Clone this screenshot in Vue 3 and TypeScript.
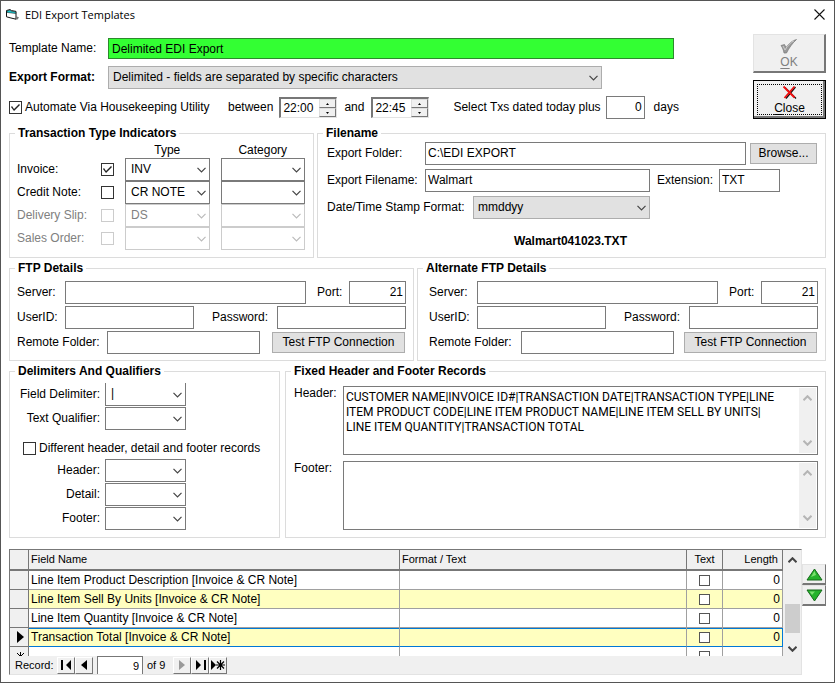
<script setup lang="ts">
import { h, ref } from 'vue'

interface IndicatorRow {
  id: string
  label: string
  checked: boolean
  type: string
  disabled: boolean
}

interface FtpPanel {
  id: string
  title: string
  port: string
}

interface FieldRow {
  name: string
  alt: boolean
  current: boolean
}

const Chevron = () =>
  h('svg', { class: 'chevron', viewBox: '0 0 9 6', width: 9, height: 6, 'aria-hidden': 'true' }, [
    h('path', { d: 'M0.5 0.8 L4.5 4.8 L8.5 0.8', fill: 'none', stroke: 'currentColor' }),
  ])

const indicators = ref<IndicatorRow[]>([
  { id: 'invoice', label: 'Invoice:', checked: true, type: 'INV', disabled: false },
  { id: 'credit', label: 'Credit Note:', checked: false, type: 'CR NOTE', disabled: false },
  { id: 'slip', label: 'Delivery Slip:', checked: false, type: 'DS', disabled: true },
  { id: 'order', label: 'Sales Order:', checked: false, type: '', disabled: true },
])

const ftpPanels: FtpPanel[] = [
  { id: 'ftp', title: 'FTP Details', port: '21' },
  { id: 'alt', title: 'Alternate FTP Details', port: '21' },
]

const recordDelimiters: string[] = ['Header', 'Detail', 'Footer']

const fields: FieldRow[] = [
  { name: 'Line Item Product Description [Invoice & CR Note]', alt: false, current: false },
  { name: 'Line Item Sell By Units [Invoice & CR Note]', alt: true, current: false },
  { name: 'Line Item Quantity [Invoice & CR Note]', alt: false, current: false },
  { name: 'Transaction Total [Invoice & CR Note]', alt: true, current: true },
]

const headerText = ref(
  'CUSTOMER NAME|INVOICE ID#|TRANSACTION DATE|TRANSACTION TYPE|LINE\nITEM PRODUCT CODE|LINE ITEM PRODUCT NAME|LINE ITEM SELL BY UNITS|\nLINE ITEM QUANTITY|TRANSACTION TOTAL',
)
const footerText = ref('')
const times = ref<string[]>(['22:00', '22:45'])
</script>

<template>
  <main class="window">
    <header class="titlebar">
      <svg class="app-icon" viewBox="0 0 13 11" width="13" height="11" aria-hidden="true">
        <path d="M0.5 1.5 L4 0.6 L5.5 1.6 L10 2.4 L10 10.2 L5 9 L0.5 7.8 Z" fill="#fff" stroke="#111" stroke-width="1" />
        <path d="M0.8 2 L4 1 L5.5 2.2 L9.8 3 L9.8 4.6 L1 3.4 Z" fill="#19c5cc" stroke="#111" stroke-width=".5" />
        <path d="M10 7 L13 8.4 L11.5 10.5 L10 10.5 Z" fill="#777" />
      </svg>
      <h1>EDI Export Templates</h1>
      <button class="close-x" type="button" aria-label="Close window">
        <svg viewBox="0 0 11 11" width="11" height="11"><path d="M0.5 0.5 L10.5 10.5 M10.5 0.5 L0.5 10.5" stroke="#111" stroke-width="1.1" /></svg>
      </button>
    </header>

    <div class="content">
      <section class="top">
        <div class="top-form">
          <div class="row name-row">
            <label class="lead" for="tpl">Template Name:</label>
            <input id="tpl" class="box grow green" type="text" value="Delimited EDI Export" />
          </div>
          <div class="row format-row">
            <label class="lead bold" for="fmt">Export Format:</label>
            <span class="combo grow gray">
              <select id="fmt"><option>Delimited - fields are separated by specific characters</option></select>
              <Chevron />
            </span>
          </div>
          <div class="row auto-row">
            <label class="check-label automate"><input class="check" type="checkbox" checked />Automate Via Housekeeping Utility</label>
            <label class="between" for="time0">between</label>
            <template v-for="(t, i) in times" :key="i">
              <span class="spin">
                <input :id="'time' + i" type="text" :value="t" />
                <span class="spin-buttons">
                  <button type="button" aria-label="Later"><svg viewBox="0 0 3 2" width="3" height="2"><path d="M0 2 L1.5 0 L3 2Z" /></svg></button>
                  <button type="button" aria-label="Earlier"><svg viewBox="0 0 3 2" width="3" height="2"><path d="M0 0 L1.5 2 L3 0Z" /></svg></button>
                </span>
              </span>
              <label v-if="i === 0" class="and" for="time1">and</label>
            </template>
            <label class="plus" for="plus">Select Txs dated today plus</label>
            <input id="plus" class="box num plus-box" type="text" value="0" />
            <span class="days">days</span>
          </div>
        </div>
        <div class="actions">
          <button class="big" type="button" disabled>
            <svg viewBox="0 0 18 15" width="18" height="15" aria-hidden="true">
              <path d="M1 6.5 L4.5 5.5 L6 8.5 C8.5 5 12 1.5 16.5 0.5 C12.5 4 9 9 6.5 14 L4 14 C3.5 11 2.5 8.5 1 6.5 Z" fill="#9a9a9a" stroke="#777" stroke-width=".7" />
              <path d="M3 7 L5 11 C7 7 11 3 14 1.8" fill="none" stroke="#ccc" stroke-width="1" />
            </svg>
            <span><u>O</u>K</span>
          </button>
          <button class="big focused" type="button">
            <svg viewBox="0 0 15 15" width="15" height="15" aria-hidden="true">
              <path d="M3 2.5 L14 13.5 M13.5 2 L4 13.5" stroke="#111" stroke-width="1.3" />
              <path d="M1.5 1.5 L12.5 12.5 M12.5 1.5 L2.5 13" stroke="#f01010" stroke-width="1.9" />
            </svg>
            <span><u>C</u>lose</span>
          </button>
        </div>
      </section>

      <section class="pair pair-types">
        <fieldset>
          <legend>Transaction Type Indicators</legend>
          <div class="body types">
            <div class="type-row heads"><span class="h-type">Type</span><span class="h-cat">Category</span></div>
            <div v-for="r in indicators" :key="r.id" class="type-row" :class="{ off: r.disabled }">
              <label :for="r.id">{{ r.label }}</label>
              <input :id="r.id" v-model="r.checked" class="check" type="checkbox" :disabled="r.disabled" />
              <span class="combo"><select :aria-label="r.label + ' type'" :disabled="r.disabled"><option>{{ r.type }}</option></select><Chevron /></span>
              <span class="combo"><select :aria-label="r.label + ' category'" :disabled="r.disabled"><option></option></select><Chevron /></span>
            </div>
          </div>
        </fieldset>

        <fieldset>
          <legend>Filename</legend>
          <div class="body files">
            <div class="row">
              <label class="file-label" for="folder">Export Folder:</label>
              <input id="folder" class="box grow" type="text" value="C:\EDI EXPORT" />
              <button class="flat browse" type="button">Browse...</button>
            </div>
            <div class="row">
              <label class="file-label" for="fname">Export Filename:</label>
              <input id="fname" class="box grow" type="text" value="Walmart" />
              <label class="ext-label" for="ext">Extension:</label>
              <input id="ext" class="box ext" type="text" value="TXT" />
            </div>
            <div class="row stamp">
              <label class="stamp-label" for="stamp">Date/Time Stamp Format:</label>
              <span class="combo grow gray"><select id="stamp"><option>mmddyy</option></select><Chevron /></span>
            </div>
            <strong class="result">Walmart041023.TXT</strong>
          </div>
        </fieldset>
      </section>

      <section class="pair pair-ftp">
        <fieldset v-for="p in ftpPanels" :key="p.id" :class="p.id">
          <legend>{{ p.title }}</legend>
          <div class="body ftp-body">
            <div class="row">
              <label class="short" :for="p.id + 'server'">Server:</label>
              <input :id="p.id + 'server'" class="box grow" type="text" />
              <label class="port-label" :for="p.id + 'port'">Port:</label>
              <input :id="p.id + 'port'" class="box num port" type="text" :value="p.port" />
            </div>
            <div class="row">
              <label class="short" :for="p.id + 'user'">UserID:</label>
              <input :id="p.id + 'user'" class="box grow" type="text" />
              <label class="pass-label" :for="p.id + 'pass'">Password:</label>
              <input :id="p.id + 'pass'" class="box grow" type="password" />
            </div>
            <div class="row">
              <label class="remote-label" :for="p.id + 'remote'">Remote Folder:</label>
              <input :id="p.id + 'remote'" class="box grow" type="text" />
              <button class="flat test" type="button">Test FTP Connection</button>
            </div>
          </div>
        </fieldset>
      </section>

      <section class="pair pair-records">
        <fieldset>
          <legend>Delimiters And Qualifiers</legend>
          <div class="body delims">
            <div class="row delim-row">
              <label for="fd">Field Delimiter:</label>
              <span class="combo open-top"><select id="fd"><option>|</option></select><Chevron /></span>
            </div>
            <div class="row delim-row">
              <label for="tq">Text Qualifier:</label>
              <span class="combo"><select id="tq"><option></option></select><Chevron /></span>
            </div>
            <label class="check-label differ"><input class="check" type="checkbox" />Different header, detail and footer records</label>
            <div v-for="d in recordDelimiters" :key="d" class="row delim-row">
              <label :for="'rd' + d">{{ d }}:</label>
              <span class="combo"><select :id="'rd' + d"><option></option></select><Chevron /></span>
            </div>
          </div>
        </fieldset>

        <fieldset>
          <legend>Fixed Header and Footer Records</legend>
          <div class="body fixed">
            <div class="memo-row">
              <label for="memoH">Header:</label>
              <div class="memo">
                <textarea id="memoH" v-model="headerText"></textarea>
                <div class="memo-scroll"><Chevron class="up" /><Chevron /></div>
              </div>
            </div>
            <div class="memo-row">
              <label for="memoF">Footer:</label>
              <div class="memo">
                <textarea id="memoF" v-model="footerText"></textarea>
                <div class="memo-scroll"><Chevron class="up" /><Chevron /></div>
              </div>
            </div>
          </div>
        </fieldset>
      </section>

      <section class="records">
        <div class="grid">
          <div class="grid-main">
            <div class="table-clip">
              <table>
                <colgroup><col class="c-sel" /><col class="c-name" /><col /><col class="c-text" /><col class="c-len" /></colgroup>
                <thead>
                  <tr><th></th><th>Field Name</th><th>Format / Text</th><th class="mid">Text</th><th class="right">Length</th></tr>
                </thead>
                <tbody>
                  <tr v-for="f in fields" :key="f.name" :class="{ alt: f.alt, current: f.current }">
                    <td class="sel"><svg v-if="f.current" viewBox="0 0 7 12" width="7" height="12"><path d="M0 0 L7 6 L0 12Z" /></svg></td>
                    <td>{{ f.name }}</td>
                    <td></td>
                    <td class="mid"><input class="check small" type="checkbox" :aria-label="f.name + ' is text'" /></td>
                    <td class="right">0</td>
                  </tr>
                  <tr>
                    <td class="sel new"><svg viewBox="0 0 9 9" width="9" height="9"><path d="M4.5 0V9 M0 4.5H9 M1 1L8 8 M8 1L1 8" stroke="#000" /></svg></td>
                    <td></td>
                    <td></td>
                    <td class="mid"><input class="check small" type="checkbox" aria-label="New field is text" /></td>
                    <td></td>
                  </tr>
                </tbody>
              </table>
            </div>
            <div class="grid-scroll"><Chevron class="up" /><span class="thumb"></span><Chevron /></div>
          </div>
          <nav class="record-nav">
            <label for="rec">Record:</label>
            <span class="nav-buttons">
              <button type="button" aria-label="First"><svg viewBox="0 0 11 10" width="11" height="10"><path d="M0 0H2V10H0Z M10 0V10L5 5Z" /></svg></button>
              <button type="button" aria-label="Previous"><svg viewBox="0 0 6 10" width="6" height="10"><path d="M6 0V10L0 5Z" /></svg></button>
            </span>
            <input id="rec" class="rec" type="text" value="9" />
            <span class="of">of 9</span>
            <span class="nav-buttons">
              <button type="button" aria-label="Next" disabled><svg viewBox="0 0 6 10" width="6" height="10"><path d="M0 0V10L6 5Z" fill="#999" /></svg></button>
              <button type="button" aria-label="Last"><svg viewBox="0 0 11 10" width="11" height="10"><path d="M9 0H11V10H9Z M1 0V10L6 5Z" /></svg></button>
              <button type="button" aria-label="New"><svg viewBox="0 0 14 10" width="14" height="10"><path d="M0 0V10L5 5Z" /><path d="M9.5 0V10 M5 5H14 M6 1.5L13 8.5 M13 1.5L6 8.5" stroke="#000" stroke-width="1.2" /></svg></button>
            </span>
          </nav>
        </div>
        <div class="movers">
          <button type="button" aria-label="Move up"><svg viewBox="0 0 17 13" width="17" height="13"><path d="M8.5 1 L16 12 H1Z" fill="#25b32b" stroke="#16691a" /><path d="M8.5 3 L5 9 L10 7Z" fill="#7be06f" /></svg></button>
          <button type="button" aria-label="Move down"><svg viewBox="0 0 17 13" width="17" height="13"><path d="M8.5 12 L16 1 H1Z" fill="#25b32b" stroke="#16691a" /><path d="M3.5 2.5 H9 L6 6Z" fill="#7be06f" /></svg></button>
        </div>
      </section>
    </div>
  </main>
</template>

<style>
body {
  background: #fff;
}
</style>

<style scoped>
.window {
  box-sizing: border-box;
  min-height: 100vh;
  border: 1px solid #555;
  background: #fff;
  color: #000;
  font: 12px/15px "Liberation Sans", Arial, sans-serif;
  overflow: hidden;
}
.window *,
.window *::after {
  box-sizing: border-box;
}
input,
select,
textarea,
button {
  font: inherit;
  color: inherit;
  margin: 0;
  padding: 0;
  border-radius: 0;
  outline: 0;
}
label {
  white-space: nowrap;
  flex: none;
}
.titlebar {
  height: 26px;
  display: flex;
  align-items: center;
  padding: 0 9px 0 5px;
}
.app-icon {
  flex: none;
}
.titlebar h1 {
  flex: 1;
  margin: 0 0 0 6px;
  font: 400 11px/15px "Open Sans", "Noto Sans", sans-serif;
}
.close-x {
  display: flex;
  border: 0;
  background: none;
}
.content {
  padding: 0 8px;
  display: flex;
  flex-direction: column;
  gap: 3px;
}
.row {
  display: flex;
  align-items: center;
  height: 23px;
}
.grow {
  flex: 1;
  min-width: 0;
}
.box {
  height: 100%;
  border: 1px solid #7a7a7a;
  background: #fff;
  padding: 0 2px 2px;
  min-width: 0;
}
.num {
  text-align: right;
}
.bold {
  font-weight: 700;
}

/* Template name, format and schedule */
.top {
  display: flex;
  margin-bottom: 4px;
}
.top-form {
  flex: 1;
  padding-top: 11px;
  display: flex;
  flex-direction: column;
  gap: 7px;
}
.name-row {
  height: 21px;
  padding-right: 79px;
}
.format-row {
  padding-right: 151px;
}
.lead {
  width: 99px;
}
.green {
  background: #3f3;
  border-color: #2c8a2c;
  padding: 0 3px;
}
.check-label {
  display: flex;
  align-items: center;
  gap: 3px;
}
.automate {
  width: 204px;
}
.between {
  margin: 0 6px 0 15px;
}
.and {
  margin: 0 7px;
}
.plus {
  margin-left: 24px;
  margin-right: 5px;
}
.plus-box {
  width: 39px;
}
.days {
  margin-left: 9px;
}
.spin {
  display: flex;
  width: 58px;
  height: 21px;
  border: 1px solid #e3e3e3;
  border-top: 2px solid #777;
  border-left: 2px solid #777;
}
.spin input {
  flex: 1;
  min-width: 0;
  border: 0;
  padding-left: 2px;
  background: none;
}
.spin-buttons {
  width: 17px;
  display: flex;
  flex-direction: column;
}
.spin-buttons button {
  flex: 1;
  display: flex;
  align-items: center;
  justify-content: center;
  background: #f0f0f0;
  border: 1px solid #ddd;
  border-right-color: #777;
  border-bottom-color: #777;
}
.actions {
  width: 73px;
  padding-top: 7px;
  display: flex;
  flex-direction: column;
  gap: 7px;
}
.big {
  height: 39px;
  padding-top: 2px;
  display: flex;
  flex-direction: column;
  align-items: center;
  justify-content: center;
  gap: 1px;
  background: #f0f0f0;
  border: 1px solid #e3e3e3;
  border-right: 2px solid #777;
  border-bottom: 2px solid #777;
}
.big:disabled {
  color: #808080;
}
.big u {
  text-underline-offset: 2px;
}
.big.focused {
  border: 1px solid #000;
  box-shadow: inset -2px -2px 0 #777;
  position: relative;
}
.big.focused::after {
  content: "";
  position: absolute;
  inset: 3px;
  border: 1px dotted #000;
}

/* Combo boxes and check boxes */
.combo {
  display: grid;
  height: 23px;
  align-items: center;
}
.combo select {
  grid-area: 1 / 1;
  appearance: none;
  width: 100%;
  height: 23px;
  min-width: 0;
  border: 1px solid #7a7a7a;
  background: #fff;
  padding: 0 18px 1px 5px;
  opacity: 1;
}
.combo.gray select {
  background: #e1e1e1;
  border-color: #adadad;
  padding-left: 4px;
}
.combo .chevron {
  grid-area: 1 / 1;
  justify-self: end;
  margin-right: 4px;
  pointer-events: none;
}
.chevron {
  color: #444;
  stroke-width: 1.2px;
}
.up {
  transform: rotate(180deg);
}
.combo.open-top select {
  border-top: 0;
}
.check {
  appearance: none;
  flex: none;
  width: 13px;
  height: 13px;
  border: 1px solid #333;
  background: #fff;
  display: grid;
  place-items: center;
}
.check:checked::after {
  content: "";
  width: 11px;
  height: 11px;
  background: #222;
  clip-path: polygon(1px 5px, 2px 4px, 4px 7px, 9px 2px, 10px 3px, 4px 9px);
}
.check.small {
  width: 11px;
  height: 11px;
  margin: 0 auto;
  border-color: #555;
}

/* Group boxes */
.pair {
  display: grid;
  gap: 3px;
}
.pair-types {
  grid-template-columns: 305fr 509fr;
}
.pair-ftp {
  grid-template-columns: 405fr 409fr;
}
.pair-records {
  grid-template-columns: 271fr 541fr;
  column-gap: 5px;
}
fieldset {
  min-width: 0;
  margin: 0;
  padding: 0;
  border: 1px solid #dcdcdc;
}
legend {
  margin-left: 5px;
  padding: 0 3px;
  height: 14px;
  font-weight: 700;
  line-height: 14px;
}
.body {
  display: flex;
  flex-direction: column;
}
.types {
  padding: 3px 8px 7px 7px;
}
.type-row {
  display: grid;
  grid-template-columns: 84px 13px 1fr 1fr;
  align-items: center;
  height: 23px;
}
.type-row .combo {
  margin-left: 11px;
}
.type-row.heads {
  height: 15px;
}
.h-type {
  grid-column: 3;
  text-align: center;
  margin-left: 11px;
}
.h-cat {
  text-align: center;
  margin-left: 11px;
}
.off {
  color: #808080;
}
.off select,
.off .check {
  border-color: #ccc;
}
.off .chevron {
  color: #bbb;
}
.files {
  padding: 2px 7px 0 9px;
  gap: 4px;
}
.file-label {
  width: 98px;
}
.flat {
  height: 21px;
  background: #e1e1e1;
  border: 1px solid #adadad;
}
.browse {
  width: 67px;
  margin-left: 4px;
  margin-right: 1px;
}
.ext-label {
  width: 62px;
  margin-left: 7px;
}
.ext {
  width: 61px;
  margin-right: 38px;
}
.stamp {
  padding-right: 168px;
}
.stamp-label {
  width: 146px;
}
.result {
  margin-top: 11px;
  padding-right: 4px;
  text-align: center;
}
.ftp-body {
  padding: 6px 7px;
  gap: 2px;
}
.alt .ftp-body {
  padding-left: 11px;
}
.short {
  width: 48px;
}
.port-label {
  width: 32px;
  margin-left: 11px;
}
.port {
  width: 57px;
}
.pass-label {
  width: 65px;
  margin-left: 18px;
}
.remote-label {
  width: 90px;
}
.alt .remote-label {
  width: 92px;
}
.test {
  width: 133px;
  margin-left: 12px;
  margin-right: 1px;
}
.alt .test {
  margin-left: 10px;
}
.delims {
  padding: 5px 7px 7px;
  gap: 1px;
}
.delim-row label {
  width: 83px;
  margin-right: 5px;
  text-align: right;
}
.delim-row .combo {
  width: 81px;
}
.differ {
  height: 27px;
  padding: 7px 0 0 6px;
}
.fixed {
  padding: 8px 7px 6px 8px;
  gap: 6px;
}
.memo-row {
  display: flex;
}
.memo-row label {
  width: 49px;
}
.memo {
  flex: 1;
  min-width: 0;
  height: 69px;
  display: flex;
  border: 1px solid #7a7a7a;
}
.memo textarea {
  flex: 1;
  min-width: 0;
  border: 0;
  resize: none;
  padding: 3px 2px 0;
  overflow: hidden;
  background: none;
  font-family: Roboto, "Liberation Sans", sans-serif;
}
.memo-scroll {
  width: 17px;
  margin: 1px;
  background: #f0f0f0;
  display: flex;
  flex-direction: column;
  justify-content: space-between;
  align-items: center;
  padding: 7px 0;
}
.memo-scroll .chevron {
  color: #b5b5b5;
  stroke-width: 2px;
}

/* Field list */
.records {
  display: flex;
  margin-top: 8px;
}
.grid {
  flex: 1;
  min-width: 0;
  border: 1px solid #e3e3e3;
  border-top-color: #777;
  border-left-color: #777;
  background: #f0f0f0;
}
.grid-main {
  display: flex;
}
.table-clip {
  flex: 1;
  min-width: 0;
  height: 106px;
  overflow: hidden;
}
table {
  width: 100%;
  table-layout: fixed;
  border-collapse: separate;
  border-spacing: 0;
  background: #fff;
}
.c-sel {
  width: 19px;
}
.c-name {
  width: 48%;
}
.c-text {
  width: 36px;
}
.c-len {
  width: 60px;
}
th {
  height: 21px;
  padding: 0 2px;
  background: #f0f0f0;
  border-right: 1px solid #777;
  border-bottom: 2px solid #777;
  font-size: 11px;
  font-weight: 400;
  text-align: left;
}
td {
  height: 19px;
  padding: 0 2px;
  line-height: 16px;
  border-right: 1px solid #a0a0a0;
  border-bottom: 1px solid #a0a0a0;
}
th.mid,
td.mid {
  text-align: center;
}
th.right {
  text-align: right;
  padding-right: 4px;
}
td.right {
  text-align: right;
}
.alt td {
  background: #ffffc0;
}
td.mid {
  line-height: 0;
}
td.sel,
.alt td.sel {
  background: #f0f0f0;
  border-right: 1px solid #777;
  border-bottom: 1px solid #777;
  text-align: center;
  line-height: 0;
  padding-left: 4px;
}
.current td:not(.sel) {
  border-bottom-color: #0078d7;
  box-shadow: inset 0 1px 0 #0078d7;
}
.current td:last-child {
  border-right-color: #0078d7;
}
.grid-scroll {
  width: 18px;
  padding: 7px 0 4px;
  display: flex;
  flex-direction: column;
  align-items: center;
}
.grid-scroll .chevron {
  stroke-width: 2px;
}
.thumb {
  width: 15px;
  height: 29px;
  margin: 41px 0 13px;
  background: #cdcdcd;
}
.record-nav {
  display: flex;
  align-items: center;
  height: 18px;
  padding-left: 5px;
  font-size: 11px;
}
.record-nav label {
  width: 42px;
}
.nav-buttons {
  display: flex;
}
.nav-buttons button {
  width: 18px;
  height: 17px;
  display: flex;
  align-items: center;
  justify-content: center;
  background: #f0f0f0;
  border: 1px solid #fff;
  border-right-color: #777;
  border-bottom-color: #777;
}
.rec {
  width: 46px;
  height: 18px;
  margin: 0 4px;
  padding-right: 3px;
  text-align: right;
  border: 1px solid #777;
  border-bottom: 0;
  background: #fff;
}
.of {
  width: 26px;
}
.movers {
  width: 24px;
  padding-top: 15px;
  display: flex;
  flex-direction: column;
}
.movers button {
  height: 21px;
  display: flex;
  align-items: center;
  justify-content: center;
  background: #f0f0f0;
  border: 1px solid #e3e3e3;
  border-right-color: #777;
  border-bottom: 2px solid #777;
}
.movers svg {
  flex: none;
}
</style>
